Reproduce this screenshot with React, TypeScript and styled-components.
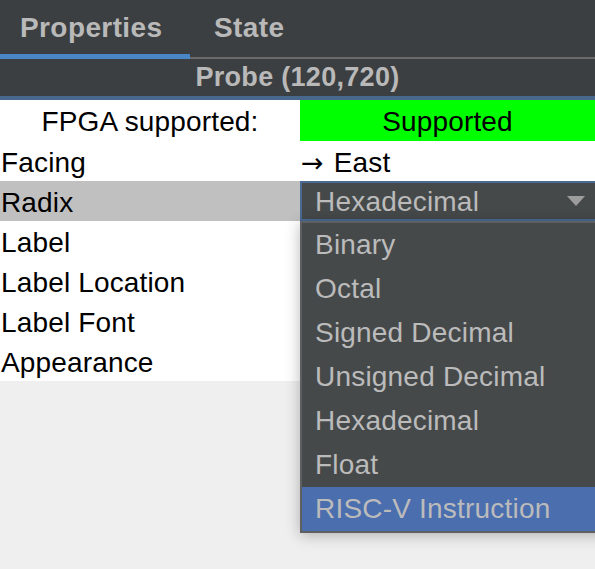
import React from "react";
import styled, { createGlobalStyle } from "styled-components";

const Global = createGlobalStyle`
  html, body { margin: 0; padding: 0; background: #efefef; }
  body { font-family: "Liberation Sans", Arial, Helvetica, sans-serif; }
  * { box-sizing: border-box; }
`;

const Page = styled.div`
  width: 595px;
  min-height: 569px;
  background: #efefef;
  overflow: hidden;
`;

const TabBar = styled.div`
  display: flex;
  height: 59px;
  background: #3c3f41;
  box-shadow: inset 0 -2px 0 #6a6a6a;
`;

const Tab = styled.div<{ $active?: boolean; $width?: number; $pad: number }>`
  width: ${(p) => (p.$width ? `${p.$width}px` : "auto")};
  height: 59px;
  padding: 14px 0 0 ${(p) => p.$pad}px;
  font-size: 28px;
  line-height: 28px;
  font-weight: bold;
  letter-spacing: 0.4px;
  color: #b9b9b9;
  border-bottom: 5px solid ${(p) => (p.$active ? "#4a86c5" : "transparent")};
`;

const Header = styled.div`
  height: 41px;
  background: #3c3f41;
  border-bottom: 4px solid #47678c;
  text-align: center;
  font-size: 27px;
  line-height: 37px;
  font-weight: bold;
  color: #b9b9b9;
  letter-spacing: 0.3px;
`;

const Table = styled.div`
  display: grid;
  grid-template-columns: 300px 295px;
  background: #ffffff;
`;

const Cell = styled.div<{ $bg?: string; $center?: boolean; $h?: number }>`
  height: ${(p) => p.$h ?? 40}px;
  line-height: 44px;
  font-size: 28px;
  letter-spacing: 0.15px;
  color: #000;
  background: ${(p) => p.$bg ?? "#ffffff"};
  text-align: ${(p) => (p.$center ? "center" : "left")};
  padding-left: ${(p) => (p.$center ? 0 : 1)}px;
  white-space: nowrap;
  overflow: visible;
`;

const ValueCell = styled(Cell)`
  padding-left: 1px;
`;

const Arrow = styled.span`
  font-family: "DejaVu Sans", sans-serif;
  font-size: 27px;
  margin-right: 10px;
`;

const ComboWrap = styled.div`
  position: relative;
  height: 40px;
`;

const Combo = styled.div`
  height: 40px;
  background: #45494a;
  border: 2px solid #4a6a94;
  border-right: none;
  display: flex;
  align-items: center;
  justify-content: space-between;
  padding: 0 10px 0 13px;
  font-size: 28px;
  line-height: 42px;
  letter-spacing: 0.2px;
  color: #bbbbbb;
`;

const ComboText = styled.span`
  padding-top: 1px;
`;

const Popup = styled.div`
  position: absolute;
  left: 0;
  top: 40px;
  width: 310px;
  background: #46494a;
  border: 2px solid #5d5f60;
  box-shadow: 0 2px 14px rgba(0, 0, 0, 0.28);
  z-index: 5;
`;

const Item = styled.div<{ $selected?: boolean }>`
  height: 44px;
  line-height: 44px;
  padding-left: 13px;
  font-size: 28px;
  letter-spacing: 0.2px;
  color: #bbbbbb;
  background: ${(p) => (p.$selected ? "#4b6eaf" : "transparent")};
  white-space: nowrap;
`;

const Caret = () => (
  <svg width="18" height="11" viewBox="0 0 18 11" aria-hidden>
    <path d="M0 0 L18 0 L9 10 Z" fill="#9c9c9c" />
  </svg>
);

const options = [
  "Binary",
  "Octal",
  "Signed Decimal",
  "Unsigned Decimal",
  "Hexadecimal",
  "Float",
  "RISC-V Instruction",
];

export default function App() {
  return (
    <Page>
      <Global />
      <TabBar>
        <Tab $active $width={190} $pad={20}>Properties</Tab>
        <Tab $pad={24}>State</Tab>
      </TabBar>
      <Header>Probe (120,720)</Header>
      <Table>
        <Cell $center $h={41}>FPGA supported:</Cell>
        <Cell $center $h={41} $bg="#00ff00">Supported</Cell>

        <Cell>Facing</Cell>
        <ValueCell>
          <Arrow>→</Arrow>East
        </ValueCell>

        <Cell $bg="#c0c0c0">Radix</Cell>
        <ComboWrap>
          <Combo>
            <ComboText>Hexadecimal</ComboText>
            <Caret />
          </Combo>
          <Popup>
            {options.map((o) => (
              <Item key={o} $selected={o === "RISC-V Instruction"}>
                {o}
              </Item>
            ))}
          </Popup>
        </ComboWrap>

        <Cell>Label</Cell>
        <Cell />
        <Cell>Label Location</Cell>
        <Cell />
        <Cell>Label Font</Cell>
        <Cell />
        <Cell>Appearance</Cell>
        <Cell />
      </Table>
    </Page>
  );
}
